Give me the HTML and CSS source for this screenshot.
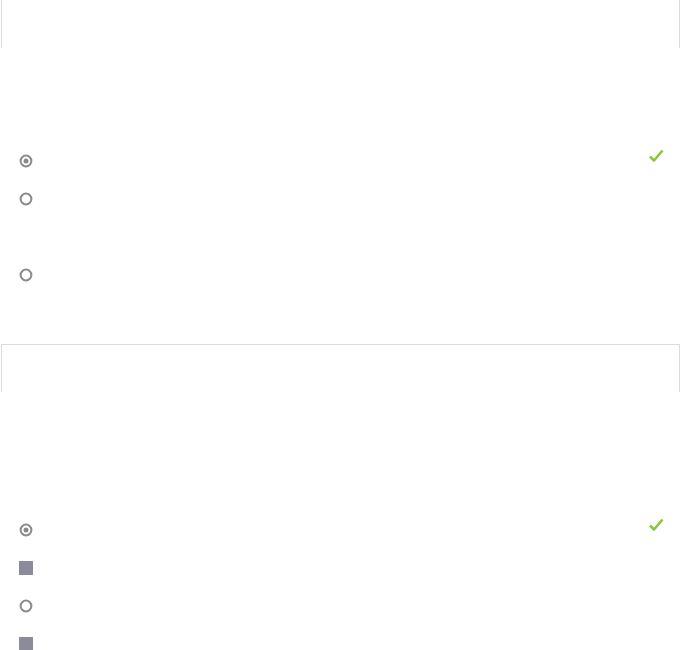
FILE: index.html
```html
<!DOCTYPE html>
<html>
<head>
<meta charset="utf-8">
<link rel="stylesheet" href="styles.css">
</head>
<body>
<div class="page">
  <section class="question q1">
    <div class="box"></div>
    <ul class="options">
      <li class="option">
        <span class="icon"><svg width="14" height="14" viewBox="0 0 14 14"><circle cx="7" cy="7" r="5.4" fill="none" stroke="#8a8a8a" stroke-width="2"/><circle cx="7" cy="7" r="2.5" fill="#8a8a8a"/></svg></span>
        <span class="check"><svg width="16" height="14" viewBox="0 0 16 14"><path d="M2 7.5 L6 11.5 L14.5 1.5" fill="none" stroke="#8cc63f" stroke-width="2.6" stroke-linejoin="round"/></svg></span>
      </li>
      <li class="option tall">
        <span class="icon"><svg width="14" height="14" viewBox="0 0 14 14"><circle cx="7" cy="7" r="5.4" fill="none" stroke="#8a8a8a" stroke-width="2"/></svg></span>
      </li>
      <li class="option">
        <span class="icon"><svg width="14" height="14" viewBox="0 0 14 14"><circle cx="7" cy="7" r="5.4" fill="none" stroke="#8a8a8a" stroke-width="2"/></svg></span>
      </li>
    </ul>
  </section>
  <section class="question q2">
    <div class="box"></div>
    <ul class="options">
      <li class="option">
        <span class="icon"><svg width="14" height="14" viewBox="0 0 14 14"><circle cx="7" cy="7" r="5.4" fill="none" stroke="#8a8a8a" stroke-width="2"/><circle cx="7" cy="7" r="2.5" fill="#8a8a8a"/></svg></span>
        <span class="check"><svg width="16" height="14" viewBox="0 0 16 14"><path d="M2 7.5 L6 11.5 L14.5 1.5" fill="none" stroke="#8cc63f" stroke-width="2.6" stroke-linejoin="round"/></svg></span>
      </li>
      <li class="option">
        <span class="icon"><span class="square"></span></span>
      </li>
      <li class="option">
        <span class="icon"><svg width="14" height="14" viewBox="0 0 14 14"><circle cx="7" cy="7" r="5.4" fill="none" stroke="#8a8a8a" stroke-width="2"/></svg></span>
      </li>
      <li class="option">
        <span class="icon"><span class="square"></span></span>
      </li>
    </ul>
  </section>
</div>
</body>
</html>
```

FILE: styles.css
```css
html, body {
  margin: 0;
  padding: 0;
  background: #ffffff;
  font-family: "Liberation Sans", Arial, sans-serif;
}
.page {
  width: 681px;
  overflow: hidden;
}
.question {
  display: flex;
  flex-direction: column;
}
.box {
  height: 48px;
  margin: 0 1px;
  border: 1px solid #dcdcdc;
  border-bottom: none;
  box-sizing: border-box;
}
.q1 .box {
  border-top: none;
}
.q1 .options {
  margin-top: 93px;
}
.q2 {
  margin-top: 51px;
}
.q2 .options {
  margin-top: 118px;
}
.options {
  list-style: none;
  margin: 0;
  padding: 0;
}
.option {
  height: 38px;
  display: flex;
  align-items: flex-start;
  padding-left: 19px;
  padding-right: 17px;
}
.option.tall {
  height: 76px;
}
.icon {
  width: 14px;
  height: 38px;
  padding-top: 1px;
  box-sizing: border-box;
  display: flex;
  align-items: center;
  justify-content: center;
}
.icon svg {
  display: block;
}
.square {
  width: 14px;
  height: 14px;
  background: #8b8b9b;
  display: block;
}
.check {
  margin-left: auto;
  height: 30px;
  display: flex;
  align-items: center;
}
.check svg {
  display: block;
}
```
